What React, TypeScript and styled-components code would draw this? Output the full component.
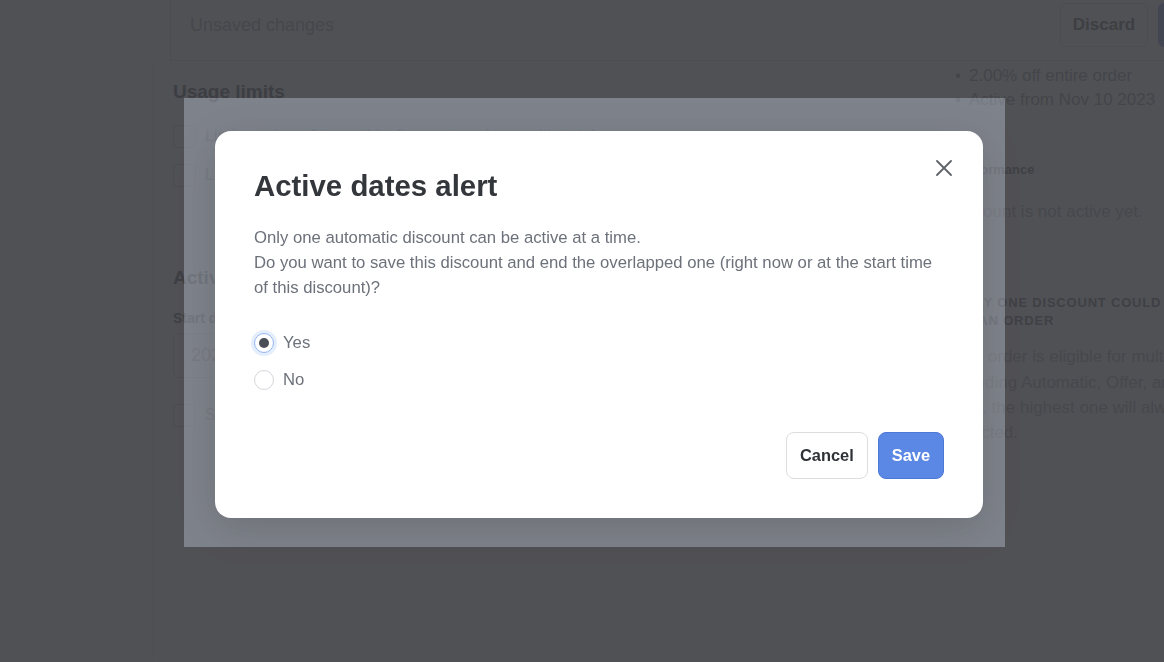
import React, {useState} from 'react'
import styled, {createGlobalStyle} from 'styled-components'

const GlobalStyle = createGlobalStyle`
  html, body {
    margin: 0;
    padding: 0;
    height: 100%;
    overflow: hidden;
  }
  body {
    font-family: "Liberation Sans", Arial, sans-serif;
  }
`

// page behind the modal (colors are washed out, the backdrop darkens them)
const Page = styled.div`
  position: relative;
  width: 100vw;
  height: 100vh;
  background: #ffffff;
  overflow: hidden;
`
const SaveBar = styled.div`
  margin-left: 170px;
  height: 50px;
  padding: 0 0 10px 19px;
  display: flex;
  align-items: center;
  justify-content: space-between;
  border-left: 1px solid #f3f3f4;
  border-bottom: 1px solid #f3f3f4;
`
const SaveTitle = styled.span`
  font-size: 18px;
  color: #dedee0;
`
const BarActions = styled.div`
  display: flex;
  gap: 10px;
  margin-right: -74px;
`
const BarButton = styled.button<{ $primary?: boolean }>`
  height: 44px;
  width: ${p => (p.$primary ? '80px' : '88px')};
  padding: 0;
  border-radius: 6px;
  border: 1px solid ${p => (p.$primary ? '#cfd5f3' : '#f0f0f1')};
  background: ${p => (p.$primary ? '#d2d8f6' : '#ffffff')};
  color: #c4c5c7;
  font-family: inherit;
  font-size: 17px;
  font-weight: 700;
`
const Body = styled.div`
  display: grid;
  grid-template-columns: 153px 782px 1fr;
`
const SideNav = styled.div`
  border-right: 1px solid #f7f7f8;
  height: 600px;
`
const Main = styled.div`
  padding: 19px 0 0 20px;
  display: flex;
  flex-direction: column;
`
const SectionTitle = styled.h2<{ $top: number }>`
  margin: ${p => p.$top}px 0 0;
  font-size: 19px;
  line-height: 24px;
  font-weight: 700;
  color: #c2c3c5;
`
const CheckRow = styled.div<{ $top: number }>`
  margin-top: ${p => p.$top}px;
  display: flex;
  align-items: center;
  gap: 9px;
  height: 24px;
  font-size: 16px;
  color: #dcdcde;
  white-space: nowrap;
`
const CheckBox = styled.span`
  width: 21px;
  height: 21px;
  border: 1px solid #eeeef0;
  border-radius: 4px;
`
const FieldLabel = styled.div`
  margin-top: 19px;
  font-size: 14px;
  line-height: 18px;
  font-weight: 700;
  color: #c6c7c9;
`
const DateInput = styled.div`
  margin-top: 6px;
  height: 45px;
  width: 360px;
  box-sizing: border-box;
  border: 1px solid #f0f0f1;
  border-radius: 6px;
  padding-left: 17px;
  display: flex;
  align-items: center;
  font-size: 18px;
  color: #d9d9db;
`
const Aside = styled.div`
  padding: 3px 0 0 20px;
  white-space: nowrap;
  overflow: hidden;
`
const Bullets = styled.ul`
  list-style: none;
  margin: 0;
  padding: 0;
  font-size: 17px;
  line-height: 24px;
  color: #d8d8da;

  li::before {
    content: '•';
    display: inline-block;
    width: 14px;
  }
`
const AsideHeading = styled.div<{ $top: number; $caps?: boolean }>`
  margin-top: ${p => p.$top}px;
  font-size: 13px;
  line-height: 18px;
  font-weight: 700;
  color: #cacacc;
  letter-spacing: ${p => (p.$caps ? '0.8px' : '0')};
  text-transform: ${p => (p.$caps ? 'uppercase' : 'none')};
`
const AsideText = styled.p<{ $top: number }>`
  margin: ${p => p.$top}px 0 0 -5px;
  font-size: 17px;
  line-height: 25.3px;
  color: #e1e1e2;
`

// modal layers
const Backdrop = styled.div`
  position: fixed;
  inset: 0;
  background: rgba(0, 1, 8, 0.685);
`
const Sheet = styled.div`
  position: absolute;
  left: 184px;
  top: 98px;
  width: 821px;
  height: 449px;
  box-sizing: border-box;
  padding: 33px 22px 29px 31px;
  background: rgba(220, 232, 248, 0.32);
`
const Dialog = styled.div`
  position: relative;
  width: 768px;
  box-sizing: border-box;
  padding: 37px 39px 39px 39px;
  background: #ffffff;
  border-radius: 16px;
  box-shadow: 0 10px 40px rgba(0, 0, 0, 0.14);
`
const CloseButton = styled.button`
  position: absolute;
  top: 29px;
  right: 31px;
  width: 16px;
  height: 16px;
  padding: 0;
  border: none;
  background: none;
  cursor: pointer;
  display: flex;
`
const Title = styled.h1`
  margin: 0;
  font-size: 29.4px;
  line-height: 36px;
  font-weight: 700;
  color: #33363b;
`
const Message = styled.p`
  margin: 21px 0 0;
  font-size: 16.7px;
  line-height: 25px;
  color: #6c717a;
`
const RadioGroup = styled.div`
  margin-top: 31px;
  display: flex;
  flex-direction: column;
  gap: 13px;
`
const RadioOption = styled.label`
  display: flex;
  align-items: center;
  gap: 9px;
  height: 24px;
  font-size: 16.7px;
  color: #6c717a;
  cursor: pointer;
`
const RadioCircle = styled.span<{ $checked: boolean }>`
  width: 20px;
  height: 20px;
  box-sizing: border-box;
  border-radius: 50%;
  border: 1px solid ${p => (p.$checked ? '#8fb3f3' : '#d5d7db')};
  box-shadow: ${p => (p.$checked ? '0 0 0 3px rgba(66, 133, 244, 0.14)' : 'none')};
  display: flex;
  align-items: center;
  justify-content: center;

  &::after {
    content: '';
    width: 10px;
    height: 10px;
    border-radius: 50%;
    background: #4a4e57;
    display: ${p => (p.$checked ? 'block' : 'none')};
  }
`
const Footer = styled.div`
  margin-top: 40px;
  display: flex;
  justify-content: flex-end;
  gap: 10px;
`
const Button = styled.button<{ $primary?: boolean }>`
  height: 47px;
  padding: 0 13px;
  border-radius: 8px;
  border: 1px solid ${p => (p.$primary ? '#4c78d8' : '#dcdde0')};
  background: ${p => (p.$primary ? '#5b88e5' : '#ffffff')};
  color: ${p => (p.$primary ? '#ffffff' : '#2f3237')};
  font-family: "Liberation Sans", Arial, sans-serif;
  font-size: 16.4px;
  font-weight: 700;
  cursor: pointer;
`

function App() {
    const [answer, setAnswer] = useState<'yes' | 'no'>('yes')

    return (
        <>
            <GlobalStyle/>
            <Page>
                <SaveBar>
                    <SaveTitle>Unsaved changes</SaveTitle>
                    <BarActions>
                        <BarButton>Discard</BarButton>
                        <BarButton $primary>Save</BarButton>
                    </BarActions>
                </SaveBar>
                <Body>
                    <SideNav/>
                    <Main>
                        <SectionTitle $top={0}>Usage limits</SectionTitle>
                        <CheckRow $top={20}><CheckBox/>Limit number of times this discount can be used in total</CheckRow>
                        <CheckRow $top={15}><CheckBox/>Limit to one use per customer</CheckRow>
                        <SectionTitle $top={79}>Active dates</SectionTitle>
                        <FieldLabel>Start date</FieldLabel>
                        <DateInput>2023-11-10</DateInput>
                        <CheckRow $top={25}><CheckBox/>Set end date</CheckRow>
                    </Main>
                    <Aside>
                        <Bullets>
                            <li>2.00% off entire order</li>
                            <li>Active from Nov 10 2023</li>
                        </Bullets>
                        <AsideHeading $top={49}>Performance</AsideHeading>
                        <AsideText $top={20}>Discount is not active yet.</AsideText>
                        <AsideHeading $top={70} $caps>
                            Only one discount could be applied<br/>to an order
                        </AsideHeading>
                        <AsideText $top={14}>
                            If an order is eligible for multiple discounts<br/>
                            including Automatic, Offer, and Code discount<br/>
                            type, the highest one will always be<br/>
                            selected.
                        </AsideText>
                    </Aside>
                </Body>
            </Page>

            <Backdrop>
                <Sheet>
                    <Dialog role="dialog" aria-labelledby="dates-alert-title">
                        <CloseButton aria-label="Close">
                            <svg width="16" height="16" viewBox="0 0 16 16" fill="none">
                                <path d="M1 1L15 15M15 1L1 15" stroke="#5f636b" strokeWidth="1.8" strokeLinecap="round"/>
                            </svg>
                        </CloseButton>
                        <Title id="dates-alert-title">Active dates alert</Title>
                        <Message>
                            Only one automatic discount can be active at a time.<br/>
                            Do you want to save this discount and end the overlapped one (right now or at the start time
                            of this discount)?
                        </Message>
                        <RadioGroup>
                            <RadioOption onClick={() => setAnswer('yes')}>
                                <RadioCircle $checked={answer === 'yes'}/>Yes
                            </RadioOption>
                            <RadioOption onClick={() => setAnswer('no')}>
                                <RadioCircle $checked={answer === 'no'}/>No
                            </RadioOption>
                        </RadioGroup>
                        <Footer>
                            <Button>Cancel</Button>
                            <Button $primary>Save</Button>
                        </Footer>
                    </Dialog>
                </Sheet>
            </Backdrop>
        </>
    )
}

export default App
